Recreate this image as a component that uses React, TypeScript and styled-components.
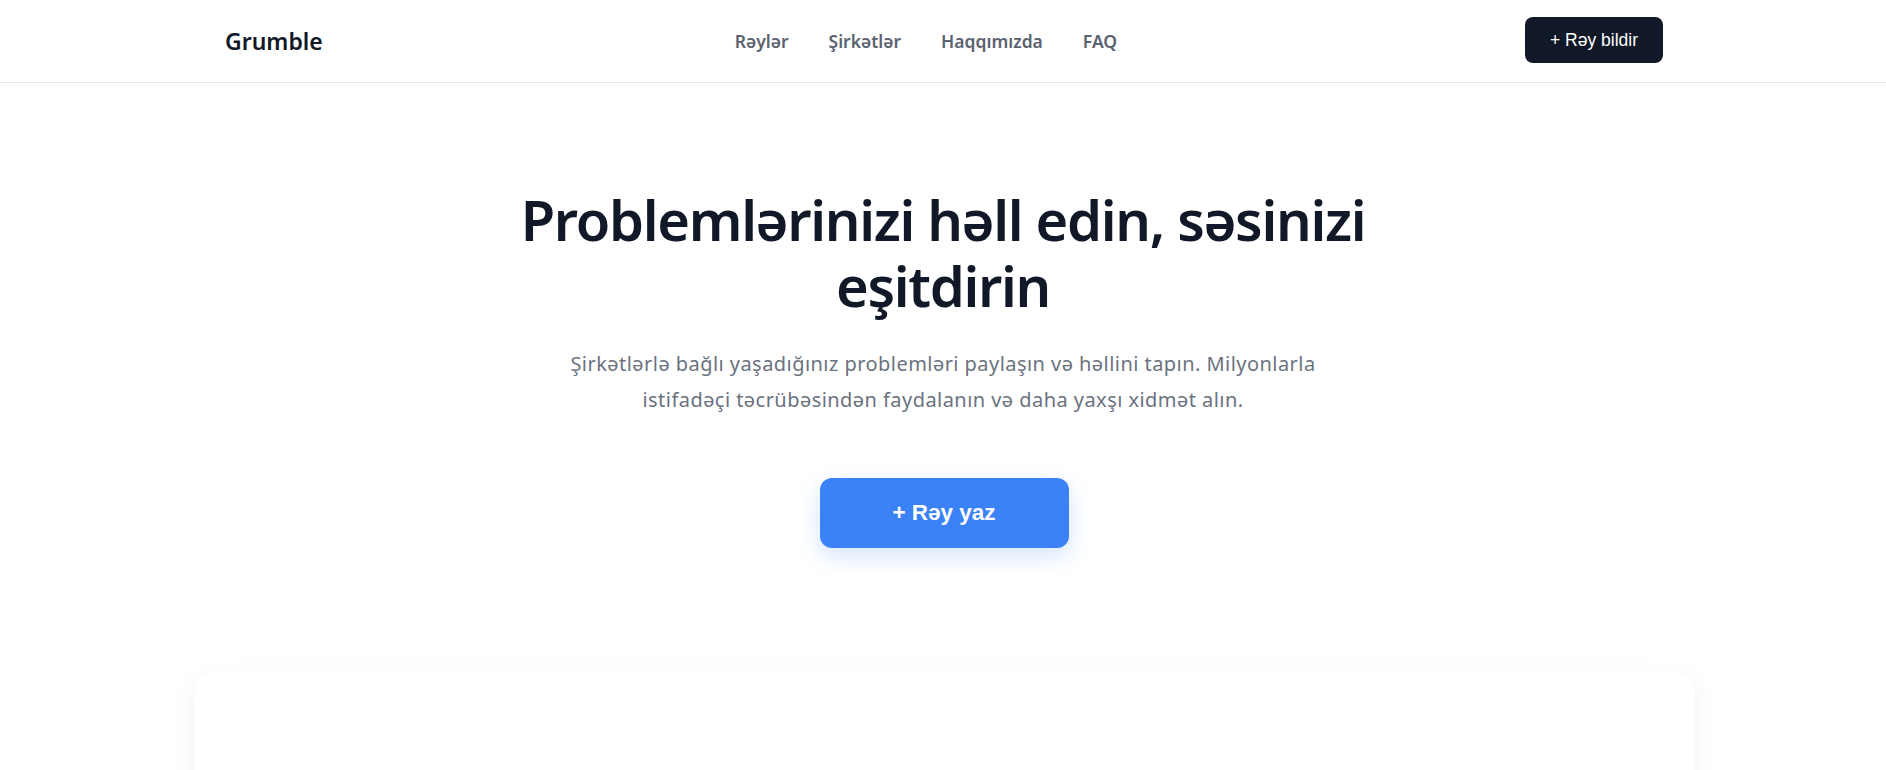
import React from "react";
import styled, { createGlobalStyle } from "styled-components";

const GlobalStyle = createGlobalStyle`
  html, body {
    margin: 0;
    padding: 0;
    background: #ffffff;
  }
  body {
    font-family: "Noto Sans", "Open Sans", sans-serif;
    -webkit-font-smoothing: antialiased;
  }
  * { box-sizing: border-box; }
`;

const Page = styled.div`
  min-height: 100vh;
  background: #ffffff;
`;

const Header = styled.header`
  background: #ffffff;
  border-bottom: 1px solid #e5e7eb;
`;

const HeaderInner = styled.div`
  max-width: 1440px;
  height: 82px;
  margin: 0 auto;
  display: flex;
  align-items: center;
  justify-content: space-between;
`;

const Logo = styled.a`
  font-family: "Noto Sans", sans-serif;
  font-size: 23px;
  font-weight: 600;
  color: #111827;
  text-decoration: none;
  padding-left: 2px;
`;

const Nav = styled.nav`
  display: flex;
  align-items: center;
  gap: 40px;
  margin-left: 4px;
`;

const NavLink = styled.a`
  font-family: "Noto Sans", sans-serif;
  font-size: 17.5px;
  font-weight: 600;
  color: #5b6270;
  text-decoration: none;
`;

const DarkButton = styled.button`
  font-family: "Liberation Sans", Arial, sans-serif;
  font-size: 17.5px;
  font-weight: 400;
  color: #ffffff;
  background: #111827;
  border: none;
  border-radius: 8px;
  height: 46px;
  padding: 0 25px;
  cursor: pointer;
  margin-top: -2px;
`;

const Hero = styled.section`
  display: flex;
  flex-direction: column;
  align-items: center;
  text-align: center;
  padding: 103px 24px 125px;
`;

const Title = styled.h1`
  margin: 0;
  max-width: 1000px;
  font-family: "Noto Sans", sans-serif;
  font-size: 56px;
  line-height: 66px;
  font-weight: 600;
  color: #111827;
  letter-spacing: -1.3px;
`;

const Lead = styled.p`
  margin: 28px 0 0;
  max-width: 770px;
  font-family: "Noto Sans", sans-serif;
  font-size: 20px;
  line-height: 36px;
  font-weight: 400;
  color: #6b7280;
  letter-spacing: 0.45px;
`;

const PrimaryButton = styled.button`
  margin-top: 60px;
  margin-left: 2px;
  height: 70px;
  width: 249px;
  font-family: "Liberation Sans", Arial, sans-serif;
  font-size: 22.5px;
  font-weight: 700;
  color: #ffffff;
  background: #3b82f6;
  border: none;
  border-radius: 12px;
  box-shadow: 0 8px 22px rgba(59, 130, 246, 0.22);
  cursor: pointer;
`;

const CardSection = styled.section`
  max-width: 1504px;
  margin: 0 auto;
  padding: 0 0 40px 4px;
`;

const Card = styled.div`
  height: 320px;
  background: #ffffff;
  border-radius: 20px;
  box-shadow: 0 6px 28px rgba(0, 0, 0, 0.05);
`;

export default function App() {
  return (
    <>
      <GlobalStyle />
      <Page>
        <Header>
          <HeaderInner>
            <Logo href="#">Grumble</Logo>
            <Nav>
              <NavLink href="#">Rəylər</NavLink>
              <NavLink href="#">Şirkətlər</NavLink>
              <NavLink href="#">Haqqımızda</NavLink>
              <NavLink href="#">FAQ</NavLink>
            </Nav>
            <DarkButton>+ Rəy bildir</DarkButton>
          </HeaderInner>
        </Header>
        <Hero>
          <Title>Problemlərinizi həll edin, səsinizi eşitdirin</Title>
          <Lead>
            Şirkətlərlə bağlı yaşadığınız problemləri paylaşın və həllini tapın. Milyonlarla
            istifadəçi təcrübəsindən faydalanın və daha yaxşı xidmət alın.
          </Lead>
          <PrimaryButton>+ Rəy yaz</PrimaryButton>
        </Hero>
        <CardSection>
          <Card />
        </CardSection>
      </Page>
    </>
  );
}
